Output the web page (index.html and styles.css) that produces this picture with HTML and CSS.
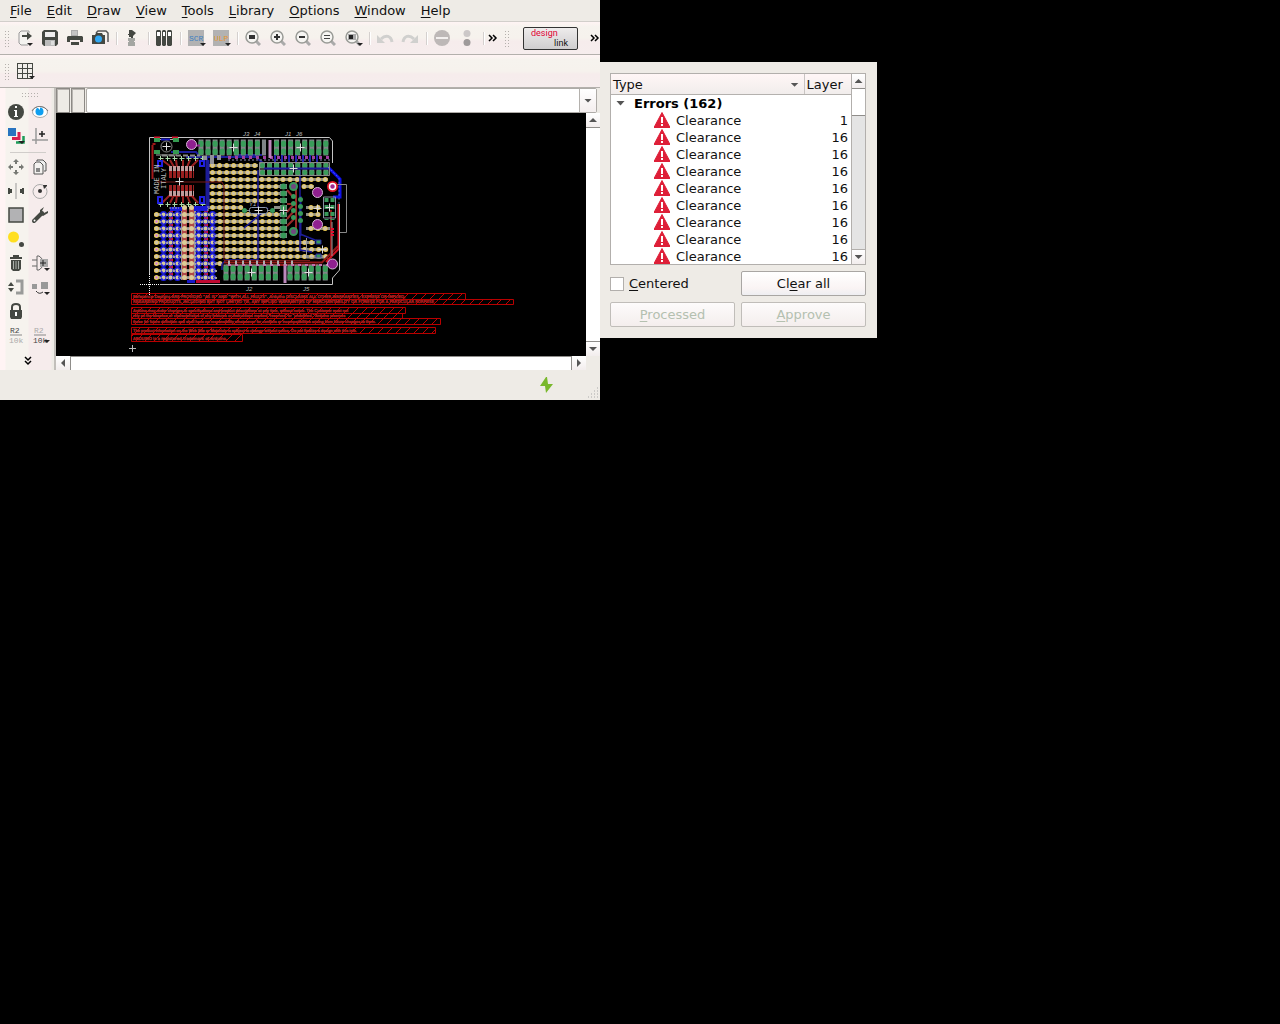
FILE: index.html
```html
<!DOCTYPE html>
<html lang="en">
<head>
<meta charset="utf-8">
<title>Board editor</title>
<link rel="stylesheet" href="styles.css">
</head>
<body>
<svg class="defs" aria-hidden="true">
  <defs>
    <symbol id="warn" viewBox="0 0 16 16"><path d="M8 0.500L16 15.500H0z" fill="#de1f38" stroke="#de1f38" stroke-linejoin="round"/><path d="M7 5h2v6H7zM7 12h2v2H7z" fill="#fff"/></symbol>
    <symbol id="lens" viewBox="0 0 16 16"><path d="M11 11l4 4" stroke="#aaa" stroke-width="3"/><circle cx="7" cy="7" r="6" fill="#f6f5f2" stroke="#999b96" stroke-width="1.500"/></symbol>
    <pattern id="hatch" width="9" height="9" patternUnits="userSpaceOnUse"><path d="M0 9L9 0" stroke="#c00000" stroke-width="1"/></pattern>
    <g id="cross"><path d="M-4 0h8M0-4v8" stroke="#ddd"/></g>
    <g id="via"><circle r="5" fill="#902090" stroke="#d8b8d8"/></g>
    <path id="field" d="M212.500 165.500H258M212.500 172.500H258M212.500 179.500H328M212.500 186.500H280M212.500 193.500H280M212.500 200.500H280M212.500 207.500H243M156.500 214.500H280M156.500 221.500H280M156.500 228.500H280M156.500 235.500H280M156.500 242.500H315M156.500 249.500H328M156.500 256.500H328M156.500 263.500H220M156.500 270.500H216M156.500 277.500H216M304 186.500H314M311 207.500H320M311 214.500H320M311 228.500H330"/>
    <path id="supply" d="M163.500 214.500V278M170.500 214.500V278M177.500 214.500V278M198.500 214.500V278M205.500 214.500V278M212.500 214.500V278"/>
  </defs>
</svg>

<main class="desktop">
<section class="window editor">
  <nav class="menubar">
    <a href="#"><u>F</u>ile</a><a href="#"><u>E</u>dit</a><a href="#"><u>D</u>raw</a><a href="#"><u>V</u>iew</a><a href="#"><u>T</u>ools</a><a href="#"><u>L</u>ibrary</a><a href="#"><u>O</u>ptions</a><a href="#"><u>W</u>indow</a><a href="#"><u>H</u>elp</a>
  </nav>

  <div class="toolbar">
    <span class="grip"></span>
    <button class="tool" aria-label="Open"><svg viewBox="0 0 16 16"><path d="M12 3V1H4L2 3v10l2 2h7" fill="#f4f3f0" stroke="#999"/><path d="M5 5h5V2l5 4-5 4V7H5z" fill="#444842"/><path d="M10 13h6l-3 3z" fill="#222"/></svg></button>
    <button class="tool" aria-label="Save"><svg viewBox="0 0 16 16"><path d="M0 2l2-2h12l2 2v12l-2 2H2l-2-2z" fill="#444842"/><path d="M3 2h10v5H3z" fill="#eee"/><path d="M3 10h10v6H3z" fill="#bbb"/><path d="M9 11h3v4H9z" fill="#ddd"/></svg></button>
    <button class="tool" aria-label="Print"><svg viewBox="0 0 16 16"><path d="M4 0h7v6H4z" fill="#aaa"/><path d="M5 2h5M5 4h5" stroke="#ddd"/><path d="M1 6h14l1 1v5h-3v-2H3v2H0V7z" fill="#444842"/><path d="M4 12h8v3H4z" fill="#444842"/></svg></button>
    <button class="tool" aria-label="Export image"><svg viewBox="0 0 16 16"><path d="M4 3l2-2h8l2 2v9" fill="none" stroke="#555" stroke-width="1.500"/><path d="M0 5h3l1-2h6l1 2h2v9H0z" fill="#444842"/><circle cx="6.500" cy="9" r="3.500" fill="#30a8f4"/></svg></button>
    <span class="sep"></span>
    <button class="tool" aria-label="Schematic"><svg viewBox="0 0 16 16"><path d="M5 0h3l4 3-4 4H5V5H4V4h1z" fill="#444842"/><path d="M7 6h2v2H7z" fill="#444842"/><path d="M4 8h7v3H4zM5 11h5v1H5zM4 12h7v4H4z" fill="#a4a6a2"/></svg></button>
    <span class="sep"></span>
    <button class="tool" aria-label="Library"><svg viewBox="0 0 16 16"><path d="M0 1l1-1h3l1 1v14l-1 1H1l-1-1zM6 1l1-1h2l1 1v14l-1 1H7l-1-1zM11 1l1-1h3l1 1v14l-1 1h-3l-1-1z" fill="#444842"/><path d="M1 2h3v4H1zM7 2h2v4H7zM12 2h3v4h-3z" fill="#fff"/></svg></button>
    <span class="sep"></span>
    <button class="tool" aria-label="Run script"><svg viewBox="0 0 16 16"><path d="M0 0h16v16H0z" fill="#b2b2b2"/><text class="glyph" x="1" y="11" fill="#3d7fc0">SCR</text><path d="M12 13h6l-3 3z" fill="#222"/></svg></button>
    <button class="tool" aria-label="Run ULP"><svg viewBox="0 0 16 16"><path d="M0 0h16v16H0z" fill="#b2b2b2"/><text class="glyph" x="1" y="11" fill="#e8962c">ULP</text><path d="M12 13h6l-3 3z" fill="#222"/></svg></button>
    <span class="sep"></span>
    <button class="tool" aria-label="Zoom to fit"><svg viewBox="0 0 16 16"><use href="#lens"/><path d="M4 5h6v4H4z" fill="#333"/></svg></button>
    <button class="tool" aria-label="Zoom in"><svg viewBox="0 0 16 16"><use href="#lens"/><path d="M4 7h6M7 4v6" stroke="#333" stroke-width="2"/></svg></button>
    <button class="tool" aria-label="Zoom out"><svg viewBox="0 0 16 16"><use href="#lens"/><path d="M4 7h6" stroke="#333" stroke-width="2"/></svg></button>
    <button class="tool" aria-label="Redraw"><svg viewBox="0 0 16 16"><use href="#lens"/><path d="M4 5.500h6M4 8.500h6" stroke="#444"/></svg></button>
    <button class="tool" aria-label="Zoom to area"><svg viewBox="0 0 16 16"><use href="#lens"/><path d="M3 4h8v6H3z" fill="#aaa"/><path d="M4 5h4v4H4z" fill="#222"/><path d="M12 13h6l-3 3z" fill="#222"/></svg></button>
    <span class="sep"></span>
    <button class="tool" aria-label="Undo"><svg viewBox="0 0 16 16"><path d="M15 12C14 6 9 4 4 9" fill="none" stroke="#d0d0ce" stroke-width="3"/><path d="M0 5v8h8z" fill="#d0d0ce"/></svg></button>
    <button class="tool" aria-label="Redo"><svg viewBox="0 0 16 16"><path d="M1 12C2 6 7 4 12 9" fill="none" stroke="#d0d0ce" stroke-width="3"/><path d="M16 5v8H8z" fill="#d0d0ce"/></svg></button>
    <span class="sep"></span>
    <button class="tool" aria-label="Stop"><svg viewBox="0 0 16 16"><circle cx="8" cy="8" r="8" fill="#bdb8b7"/><path d="M2 8h12" stroke="#f2efee" stroke-width="2"/></svg></button>
    <button class="tool" aria-label="Go"><svg viewBox="0 0 16 16"><circle cx="8" cy="3.500" r="3.500" fill="#ccc8c8"/><circle cx="8" cy="12.500" r="3.500" fill="#9e9a9a"/></svg></button>
    <span class="sep"></span>
    <button class="more" aria-label="More tools"><svg viewBox="0 0 8 6"><path d="M0 0l3 3-3 3M4 0l3 3-3 3" fill="none" stroke="#000" stroke-width="1.500"/></svg></button>
    <span class="grip"></span>
    <button class="designlink"><span>design</span><span class="link">link</span></button>
    <button class="more last" aria-label="More links"><svg viewBox="0 0 8 6"><path d="M0 0l3 3-3 3M4 0l3 3-3 3" fill="none" stroke="#000" stroke-width="1.500"/></svg></button>
  </div>

  <div class="toolbar">
    <span class="grip"></span>
    <button class="tool" aria-label="Grid"><svg viewBox="0 0 16 16"><path d="M0 0h16v16H0z" fill="#444842"/><path d="M1 1h4v4H1zM6 1h4v4H6zM11 1h4v4h-4zM1 6h4v4H1zM6 6h4v4H6zM11 6h4v4h-4zM1 11h4v4H1zM6 11h4v4H6zM11 11h4v4h-4z" fill="#f0eeea"/><path d="M12 13h6l-3 3z" fill="#222"/></svg></button>
  </div>

  <div class="workspace">
    <aside class="palette">
      <span class="grip-wide"></span>
      <div class="palette-grid">
        <button class="tool" aria-label="Info"><svg viewBox="0 0 16 16"><circle cx="8" cy="8" r="8" fill="#444842"/><path d="M7 2h2v2H7zM6 6h3v6h1v1H6v-1h1V7H6z" fill="#fff"/></svg></button>
        <button class="tool" aria-label="Show"><svg viewBox="0 0 16 16"><ellipse cx="8" cy="8" rx="7.500" ry="5.500" fill="#fff" stroke="#aaa"/><path d="M0 7C3 1 12 1 16 7" fill="none" stroke="#777"/><circle cx="7.500" cy="7.500" r="4" fill="#0e9ef0"/><path d="M5 3l3 0v3z" fill="#fff"/></svg></button>
        <button class="tool" aria-label="Display layers"><svg viewBox="0 0 16 16"><path d="M8 14.500h7.500V8" fill="none" stroke="#1b9c58" stroke-width="2.500"/><path d="M4 10.500h7V4" fill="none" stroke="#d81f50" stroke-width="3"/><path d="M0 0h8v8H0z" fill="#2874c0"/><path d="M10 13h7l-3 3z" fill="#222"/></svg></button>
        <button class="tool" aria-label="Mark"><svg viewBox="0 0 16 16"><path d="M4 0v16M0 12h16" stroke="#999" stroke-width="1.500"/><path d="M7 6h6M10 3v6" stroke="#222" stroke-width="1.500"/></svg></button>
        <span class="rule"></span>
        <button class="tool" aria-label="Move"><svg viewBox="0 0 16 16"><path d="M8 0l3 3H9v2H7V3H5zM8 16l3-3H9v-2H7v2H5zM0 8l3-3v2h2v2H3v2zM16 8l-3-3v2h-2v2h2v2z" fill="#777974"/></svg></button>
        <button class="tool" aria-label="Copy"><svg viewBox="0 0 16 16"><path d="M5 2V1h6l3 3v8h-2" fill="#eee" stroke="#555"/><path d="M2 5l2-2h4l3 3v9H2z" fill="#f4f2f0" stroke="#555"/><path d="M4 9h4v4H4z" fill="#888"/></svg></button>
        <button class="tool" aria-label="Mirror"><svg viewBox="0 0 16 16"><path d="M8 0v16" stroke="#999"/><path d="M0 5h2v1h2v4H2v1H0zM16 5h-2v1h-2v4h2v1h2z" fill="#444842"/></svg></button>
        <button class="tool" aria-label="Rotate"><svg viewBox="0 0 16 16"><circle cx="8" cy="8.500" r="7" fill="none" stroke="#aaa"/><circle cx="8" cy="8" r="2" fill="#333"/><path d="M11 2h4v1l-3 3z" fill="#333"/></svg></button>
        <button class="tool" aria-label="Group"><svg viewBox="0 0 16 16"><path d="M1 1h14v14H1z" fill="#b2b2b4" stroke="#444842" stroke-width="1.500"/></svg></button>
        <button class="tool" aria-label="Change"><svg viewBox="0 0 16 16"><path d="M2 14L10 6" stroke="#444842" stroke-width="4" stroke-linecap="round"/><path d="M12 0L8 3v4l3 2 5-3V4l-4 2-2-2z" fill="#444842"/><circle cx="2.500" cy="13.500" r="1" fill="#fff"/></svg></button>
        <button class="tool" aria-label="Paste"><svg viewBox="0 0 16 16"><circle cx="5.500" cy="6" r="5.500" fill="#ffdf20"/><circle cx="13.500" cy="13.500" r="2.500" fill="#444842"/></svg></button>
        <span></span>
        <button class="tool" aria-label="Delete"><svg viewBox="0 0 16 16"><path d="M5 0h6v2h3v2H2V2h3zM3 5h10v9l-2 2H5l-2-2z" fill="#444842"/><path d="M5.500 6v8M8 6v8M10.500 6v8" stroke="#aab0aa"/></svg></button>
        <button class="tool" aria-label="Add"><svg viewBox="0 0 16 16"><path d="M0 5h5M0 11h5" stroke="#666"/><path d="M5 1h2q4 2 4 7t-4 7H5z" fill="none" stroke="#666"/><path d="M8 4h8v8H8z" fill="#aaa"/><path d="M8 8h6M11 5v6" stroke="#222"/><path d="M12 13h6l-3 3z" fill="#222"/></svg></button>
        <button class="tool" aria-label="Pinswap"><svg viewBox="0 0 16 16"><path d="M0 7l3-4 3 4zM0 9l3 4 3-4z" fill="#444842"/><path d="M8 2h6v12H8" fill="none" stroke="#999b99" stroke-width="3"/></svg></button>
        <button class="tool" aria-label="Replace"><svg viewBox="0 0 16 16"><path d="M0 5h5v5H0zM9 3h7v7H9z" fill="#999"/><path d="M4 12q3 4 7 1" fill="none" stroke="#333"/><path d="M12 13h6l-3 3z" fill="#222"/></svg></button>
        <button class="tool" aria-label="Lock"><svg viewBox="0 0 16 16"><path d="M4 8V4q0-3 4-3t4 3v4" fill="none" stroke="#444842" stroke-width="2"/><path d="M2 7h12v7l-1 2H3l-1-2z" fill="#444842"/><path d="M7 9h2v4H7z" fill="#fff"/></svg></button>
        <span></span>
        <button class="tool" aria-label="Name"><svg viewBox="0 0 16 16"><text class="glyph" x="2" y="6" fill="#444">R2</text><path d="M2 8h12" stroke="#888"/><text class="glyph" x="1" y="16" fill="#aaa">10k</text></svg></button>
        <button class="tool" aria-label="Value"><svg viewBox="0 0 16 16"><text class="glyph" x="2" y="6" fill="#aaa">R2</text><path d="M2 8h12" stroke="#888"/><text class="glyph" x="1" y="16" fill="#444">10k</text><path d="M12 13h6l-3 3z" fill="#222"/></svg></button>
      </div>
      <button class="more down" aria-label="More tools"><svg viewBox="0 0 6 8"><path d="M0 0l3 3 3-3M0 4l3 3 3-3" fill="none" stroke="#000" stroke-width="1.500"/></svg></button>
    </aside>

    <div class="sheet">
      <div class="command">
        <span class="coord"></span><span class="coord"></span>
        <div class="combo"><input type="text" aria-label="Command line"><button aria-label="Command history"><i class="tri down"></i></button></div>
      </div>
      <div class="view">
        <svg class="board" viewBox="56 113 530 243" preserveAspectRatio="xMinYMin slice">
          <!-- prototyping pads: links, copper, drill area -->
          <g fill="none">
            <path stroke="#8c8c88" stroke-width="3" d="M208 165.500H258M208 172.500H258M208 179.500H328M208 186.500H280M208 193.500H280M208 200.500H280M208 207.500H243M274 207.500H280M154 214.500H280M154 221.500H280M154 228.500H280M154 235.500H280M154 242.500H315M154 249.500H328M154 256.500H328M154 263.500H220M154 270.500H216M154 277.500H216M302 186.500H314M306 207.500H320M306 214.500H320M306 228.500H330"/>
            <use href="#field" stroke="#ecc430" stroke-width="5" stroke-linecap="round" stroke-dasharray="0 7.050"/>
            <use href="#field" stroke="#d0c4a4" stroke-width="4" stroke-linecap="round" stroke-dasharray="0 7.050"/>
          </g>

          <!-- supply columns -->
          <g fill="none">
            <g class="crisp">
              <path d="M170.500 211V280M205.500 211V280" stroke="#d81038" stroke-width="4"/>
              <path d="M181.500 207V280M194.500 207V280" stroke="#999" stroke-width="2"/>
              <path d="M184.500 207V280M191.500 207V280" stroke="#b04848" stroke-width="5"/>
            </g>
            <g stroke-linecap="round" stroke-dasharray="0 7">
              <path d="M163.500 214.500V278M177.500 214.500V278M198.500 214.500V278M212.500 214.500V278" stroke="#1c1ce0" stroke-width="7"/>
              <path d="M170.500 214.500V278M205.500 214.500V278" stroke="#2828c0" stroke-width="6"/>
              <path d="M154 214.500H180M154 221.500H180" stroke="none"/>
              <use href="#supply" stroke="#d4c8a0" stroke-width="4"/>
              <path stroke="#dccc98" stroke-width="5" d="M184.500 207.500V278M191.500 207.500V278"/>
            </g>
            <path class="crisp" stroke="#a0a0a0" stroke-width="2" stroke-dasharray="2 5" d="M159 214.500H218M159 221.500H218M159 228.500H218M159 235.500H218M159 242.500H218M159 249.500H218M159 256.500H218M159 263.500H218M159 270.500H218M159 277.500H218"/>
            <path stroke="#2828d8" stroke-dasharray="2 5" d="M162.500 215.500V280M178.500 213.500V280M197.500 215.500V280M213.500 213.500V280"/>
          </g>
          <g fill="#e070d0"><circle cx="156.500" cy="221.500" r="1"/><circle cx="156.500" cy="235.500" r="1"/><circle cx="156.500" cy="249.500" r="1"/><circle cx="156.500" cy="263.500" r="1"/><circle cx="156.500" cy="277.500" r="1"/></g>

          <!-- copper traces -->
          <g fill="none">
            <path d="M171 152H196L201 158M207 158V208M186 157H256L264 164M235 155H262" stroke="#1c1c98" stroke-width="2"/>
            <path d="M207.500 160V208" stroke="#1c1c98" stroke-width="4"/>
            <path d="M258 170V262M244 228L268 208M300 170V200M300 204V250L312 252M300 234L320 242M222 264V270M222 264L226 260H258" stroke="#1c1c98" stroke-width="1.500"/>
            <path d="M152.500 145V179M152.500 144h3" stroke="#a01818" stroke-width="2"/>
            <path d="M157 182H222L224 186V260M224 260.500H310" stroke="#781818"/>
            <path d="M224 262.500H322L338 246M226 265H318M331 210V258" stroke="#901818" stroke-width="2"/>
            <path d="M196 281.500H220" stroke="#c00830" stroke-width="3"/><path d="M187 281.500h8" stroke="#1818c8" stroke-width="3"/>
            <path d="M338.500 204V249L326 262" stroke="#d01020" stroke-width="2"/>
            <path d="M328 167L340 179V197H333" stroke="#1010e8" stroke-width="3"/>
            <path d="M328 167L339 178V205" stroke="#70a0ff" stroke-dasharray="1 3"/>
          </g>

          <!-- outline -->
          <g fill="none" stroke="#c4c4c4">
            <path d="M149.500 137.500H329.500L332.500 141V163M339.500 204V270L332.500 278V284.500H160M149.500 137.500V275"/>
            <path d="M336 184.500H346.500V232.500H340" stroke="#888"/>
            <path d="M140 284.500H160M149.500 274V295" stroke="#fff" stroke-dasharray="1 1"/>
          </g>

          <!-- reset switch -->
          <path d="M156 139.500h21M156 155h21" stroke="#a8a8a8" fill="none"/>
          <path d="M154 137.500h6M172 137.500h6" stroke="#d81830" stroke-width="2"/>
          <path d="M161 139.500h9" stroke="#1818c8" stroke-width="2"/>
          <path fill="#349a50" d="M154 138h6v4h-6zM173 138h6v4h-6zM154 150h6v4h-6zM173 150h6v4h-6z"/>
          <circle cx="166.500" cy="146.500" r="5.500" fill="none" stroke="#888"/><use href="#cross" x="166.500" y="146.500"/>

          <!-- fourteen pin driver -->
          <g fill="none">
            <path d="M162 160l8 6M170 160l4 7M176 160l1 7M183 160v7M190 160l-3 7M198 160l-7 7M162 203l8-8M170 203l4-8M176 203l1-8M183 203v-8M190 203l-3-8M198 203l-7-8" stroke="#982020" stroke-width="2"/>
            <g class="crisp">
              <path d="M169 172H194M169 190.500H194" stroke="#982020" stroke-width="12" stroke-dasharray="3 1"/>
              <path d="M169 168.500H194M169 193.500H194" stroke="#c09c9c" stroke-width="5" stroke-dasharray="3 1"/>
            </g>
            <path d="M158.500 158.500H206M158.500 204.500H206" stroke="#a8d8a8" stroke-dasharray="5 2"/>
            <path class="crisp" d="M160 158.500H204M160 204.500H204" stroke="#a8d8a8" stroke-width="5" stroke-dasharray="1 6"/>
            <path d="M162 155.500H200" stroke="#888" stroke-width="2" stroke-dasharray="5 2"/>
          </g>
          <use href="#cross" x="179.500" y="181.500"/>
          <path fill="none" stroke="#2020e0" stroke-width="2" d="M158 161h4v5h-4zM200 161h4v5h-4zM158 197h4v6h-4zM200 197h4v6h-4z"/>
          <path d="M170 207h12v4h-12zM194 206h14v5h-14z" fill="#1818d8"/><path d="M169 208h10M208 206v5" stroke="#aaa" stroke-dasharray="2 1"/>
          <g class="silk" fill="#b8b8b8"><text transform="translate(159 194) rotate(-90)">MADE IN</text><text transform="translate(166 189) rotate(-90)">ITALY</text></g>

          <!-- header strips -->
          <g fill="none">
            <g stroke="#808488" stroke-width="8" stroke-dasharray="5 2.050">
              <path d="M198.500 143.500H266M274 143.500H329M198.500 151.500H266M274 151.500H329M223.500 268.500H280M287.500 268.500H329M223.500 276.500H280M287.500 276.500H329"/>
              <path d="M260 165.500H329M260 172.500H329" stroke-width="6"/>
            </g>
            <g stroke="#3a9c5a" stroke-width="5" stroke-linecap="round" stroke-dasharray="0 7.050">
              <path d="M201 143H264M276.500 143H329M201 151H264M276.500 151H329M226 268H279M290 268H329M226 276H279M290 276H329"/>
              <path d="M201 144.500H264M276.500 144.500H329M201 152.500H264M276.500 152.500H329M226 269.500H279M290 269.500H329M226 277.500H279M290 277.500H329"/>
              <path d="M262.500 165.500H329M262.500 172.500H329"/>
            </g>
            <path d="M264 168.500H328" stroke="#1c1c98" stroke-width="2"/>
            <path d="M259.500 162.500H329.500V175.500H259.500z" stroke="#888"/>
            <path d="M205 155.500V160M212 155V164M219 155V160" stroke="#909098" stroke-width="4"/>
            <path d="M228 157.500H330" stroke="#a040a0" stroke-width="3" stroke-dasharray="3 4"/>
            <path d="M228 160H330" stroke="#9090b8" stroke-dasharray="2 2"/>
            <path d="M275 155V162M282 155V162M289 155V162M296 155V162M303 155V162M310 155V162M317 155V162" stroke="#2424b0" stroke-width="2"/>
            <path d="M270 140V158M285 264V283" stroke="#bc88bc" stroke-width="3"/>
            <path d="M228 265H328" stroke="#c070b0" stroke-width="2" stroke-dasharray="3 4"/>
            <path d="M228 262.500H296" stroke="#b0b0b0" stroke-width="4" stroke-dasharray="2 5"/>
            <path d="M193 145.500H200" stroke="#902090" stroke-width="2"/>
          </g>
          <use href="#cross" x="233.500" y="147.500"/><use href="#cross" x="300.500" y="147.500"/><use href="#cross" x="251.500" y="272.500"/><use href="#cross" x="308.500" y="272.500"/><use href="#cross" x="293.500" y="168.500"/>

          <!-- crystal -->
          <path d="M244 210.500H273" stroke="#888"/><rect x="249.500" y="207.500" width="18" height="6" rx="2" fill="#000" stroke="#8c98b0"/><use href="#cross" x="258.500" y="210.500"/>
          <circle cx="244.500" cy="210.500" r="2.500" fill="#38985a"/><circle cx="272.500" cy="210.500" r="2.500" fill="#38985a"/>

          <!-- series header and connectors -->
          <path d="M283.500 184V238" stroke="#808488" stroke-width="7" stroke-dasharray="5 2"/><path d="M283.500 186.500V238" stroke="#38985a" stroke-width="6" stroke-linecap="round" stroke-dasharray="0 7"/>
          <g fill="none" stroke="#982828" stroke-width="2"><path d="M287 190l6 7M287 204h6M287 212l7-8M287 219l7-8M287 226l7-7M296 182V232"/></g>
          <path d="M300.500 196V236" stroke="#1c1c98" stroke-width="2"/>
          <g stroke="#38985a" stroke-width="5" stroke-linecap="round" stroke-dasharray="0 7"><path d="M293.500 196.500V222M300.500 199.500V222"/></g>
          <circle cx="293.500" cy="186.500" r="3.500" fill="#704880" stroke="#38985a" stroke-width="2"/><circle cx="293.500" cy="231.500" r="3.500" fill="#704880" stroke="#38985a" stroke-width="2"/>
          <g stroke="#38985a" stroke-width="4" stroke-dasharray="4 3"><path d="M326.500 198V220M332.500 198V220"/></g>
          <path d="M323.500 197V218H335.500V197z" fill="none" stroke="#8890a0"/>
          <use href="#cross" x="329.500" y="207.500"/><use href="#cross" x="317.500" y="208.500"/><use href="#cross" x="283.500" y="210.500"/><use href="#cross" x="322.500" y="249.500"/>
          <path fill="#38985a" stroke="#2828a0" d="M316 240h5v4h-5zM316 254h5v4h-5z"/>
          <path d="M306.500 238V258H324M332 222V256" fill="none" stroke="#999"/>
          <path d="M332.500 228V236" stroke="#e01030" stroke-width="3" stroke-dasharray="2 1"/>
          <use href="#via" x="191.500" y="144.500"/><use href="#via" x="317.500" y="192.500"/><use href="#via" x="317.500" y="224.500"/><use href="#via" x="332.500" y="264"/>
          <circle cx="332.500" cy="186.500" r="4.500" fill="#a02890" stroke="#e01828" stroke-width="2"/><circle cx="332.500" cy="186.500" r="3" fill="none" stroke="#fff" stroke-width="1.500"/>

          <g class="silk small" fill="#bbb"><text x="243" y="136">J3</text><text x="254" y="136">J4</text><text x="285" y="136">J1</text><text x="296" y="136">J6</text><text x="246" y="291">J2</text><text x="303" y="291">J5</text><text x="249" y="206">Y1</text></g>

          <!-- notice block -->
          <g fill="url(#hatch)" stroke="#b80000">
            <path d="M131.500 293.500H465.500V299.500H131.500zM131.500 299.500H513.500V304.500H131.500zM131.500 307.500H405.500V313.500H131.500zM131.500 313.500H402.500V318.500H131.500zM131.500 318.500H440.500V324.500H131.500zM131.500 327.500H435.500V333.500H131.500zM131.500 334.500H242.500V341.500H131.500z"/>
          </g>
          <g class="notice" fill="#b82424" stroke="#a81c1c" stroke-width="0.400">
            <text class="wide" x="133" y="298">Reference Designs ARE PROVIDED "AS IS" AND "WITH ALL FAULTS". Arduino DISCLAIMS ALL OTHER WARRANTIES, EXPRESS OR IMPLIED,</text>
            <text class="wide" x="133" y="303">REGARDING PRODUCTS, INCLUDING BUT NOT LIMITED TO, ANY IMPLIED WARRANTIES OF MERCHANTABILITY OR FITNESS FOR A PARTICULAR PURPOSE</text>
            <text x="133" y="312">Arduino may make changes to specifications and product descriptions at any time, without notice. The Customer must not</text>
            <text x="133" y="317">rely on the absence or characteristics of any features or instructions marked "reserved" or "undefined." Arduino reserves</text>
            <text x="133" y="323">these for future definition and shall have no responsibility whatsoever for conflicts or incompatibilities arising from future changes to them.</text>
            <text x="133" y="332">The product information on the Web Site or Materials is subject to change without notice. Do not finalize a design with this info.</text>
            <text class="wide" x="133" y="340">ARDUINO is a registered trademark of Arduino.</text>
          </g>
          <path d="M129 348.500h7M132.500 345v7" stroke="#bbb"/>
        </svg>
        <div class="scroll vertical"><button aria-label="Scroll up"><i class="tri up"></i></button><span class="thumb full"></span><button aria-label="Scroll down"><i class="tri down"></i></button></div>
        <div class="scroll horizontal"><button aria-label="Scroll left"><i class="tri left"></i></button><span class="thumb full"></span><button aria-label="Scroll right"><i class="tri right"></i></button></div>
      </div>
    </div>
  </div>

  <footer class="status">
    <svg class="bolt" viewBox="0 0 14 16"><path d="M7 0L1 9h5l1 7 7-9H9L8 0z" fill="#79b82c"/></svg>
    <svg class="resize" viewBox="0 0 12 12"><path d="M10 1h1M7 4h4M4 7h7M1 10h10" stroke="#aaa" stroke-dasharray="1 2"/></svg>
  </footer>
</section>

<section class="window errors">
  <div class="list">
    <table>
      <thead><tr><th class="type">Type <i class="tri down"></i></th><th class="layer">Layer</th></tr></thead>
      <tbody>
        <tr class="group"><td colspan="2"><i class="tri down"></i>Errors (162)</td></tr>
        <tr><td><svg><use href="#warn"/></svg>Clearance</td><td>1</td></tr>
        <tr><td><svg><use href="#warn"/></svg>Clearance</td><td>16</td></tr>
        <tr><td><svg><use href="#warn"/></svg>Clearance</td><td>16</td></tr>
        <tr><td><svg><use href="#warn"/></svg>Clearance</td><td>16</td></tr>
        <tr><td><svg><use href="#warn"/></svg>Clearance</td><td>16</td></tr>
        <tr><td><svg><use href="#warn"/></svg>Clearance</td><td>16</td></tr>
        <tr><td><svg><use href="#warn"/></svg>Clearance</td><td>16</td></tr>
        <tr><td><svg><use href="#warn"/></svg>Clearance</td><td>16</td></tr>
        <tr><td><svg><use href="#warn"/></svg>Clearance</td><td>16</td></tr>
      </tbody>
    </table>
    <div class="scroll vertical"><button aria-label="Scroll up"><i class="tri up"></i></button><span class="thumb"></span><span class="track"></span><button aria-label="Scroll down"><i class="tri down"></i></button></div>
  </div>
  <div class="actions">
    <label><input type="checkbox"><span><u>C</u>entered</span></label>
    <button>Cl<u>e</u>ar all</button>
    <button disabled><u>P</u>rocessed</button>
    <button disabled><u>A</u>pprove</button>
  </div>
</section>
</main>
</body>
</html>
```
FILE: styles.css
```css
* { box-sizing: border-box; }
body { margin: 0; background: #000; color: #111; font: 13px/17px "DejaVu Sans", sans-serif; }
button { margin: 0; padding: 0; border: 0; background: none; font: inherit; color: inherit; }
u { text-decoration: underline; text-underline-offset: 2px; text-decoration-skip-ink: none; }
.defs { position: absolute; width: 0; height: 0; }
.desktop { position: relative; min-height: 100vh; }
.window { position: absolute; background: #eeebe6; }

/* editor window */
.editor { left: 0; top: 0; width: 600px; height: 400px; display: flex; flex-direction: column; overflow: hidden; }
.menubar { display: flex; gap: 15px; height: 22px; padding: 2px 10px; border-bottom: 1px solid #d2cfcb; flex: none; }
.menubar a { color: inherit; text-decoration: none; }
.toolbar { display: flex; align-items: center; flex: none; height: 33px; border-bottom: 1px solid #b3b0ac; background: linear-gradient(#fff4f4 0, #f6f3ee 15%, #f6f2ed 50%, #f6ecec 60%, #f6eded 100%); }
.tool { width: 25px; height: 24px; display: grid; place-items: center; flex: none; }
.tool svg { width: 16px; height: 16px; overflow: visible; display: block; }
.glyph { font: 8px "Liberation Mono", monospace; }
.grip { width: 5px; height: 17px; margin: 0 3px 0 4px; flex: none; background: radial-gradient(circle, #b4b0ac 1px, transparent 1px) 0 0 / 3px 3px; }
.sep { width: 7px; height: 13px; flex: none; background: linear-gradient(90deg, transparent 4px, #d4d0ce 4px, #d4d0ce 5px, #fff 5px, #fff 6px, transparent 6px); }
.more { width: 14px; display: grid; place-items: center; flex: none; }
.more svg { width: 8px; height: 6px; overflow: visible; }
.more.last { margin-left: auto; width: 10px; }
.designlink { width: 55px; height: 23px; margin-left: 11px; padding: 0 9px 0 7px; border: 1px solid #333; border-radius: 2px; background: linear-gradient(#eeecec, #d0cecf); font: 9px/10px Roboto, sans-serif; color: #e00034; text-align: left; flex: none; }
.designlink span { display: block; }
.designlink .link { text-align: right; color: #111; }

.workspace { display: flex; flex: 1; min-height: 0; }
.palette { width: 56px; padding: 4px 4px 0; flex: none; border-right: 2px solid #c2bfbb; background: linear-gradient(90deg, #fff4f4 5px, #f6f3ee 6px, #f6f3ee 28px, #f6ecec 29px, #f6ecec 51px, #eeebe6 52px); }
.grip-wide { display: block; width: 17px; height: 6px; margin: 0 auto 2px 17px; background: radial-gradient(circle, #b4b0ac 1px, transparent 1px) 0 0 / 3px 3px; }
.palette-grid { display: grid; grid-template-columns: 24px 24px; }
.palette .tool { width: 24px; }
.rule { grid-column: 1 / 3; height: 1px; margin: 4px 6px 2px; background: #d0cdca; }
.more.down { width: 48px; height: 28px; }
.more.down svg { width: 6px; height: 8px; }

.sheet { display: flex; flex-direction: column; flex: 1; min-width: 0; }
.command { display: flex; gap: 1px; height: 25px; flex: none; padding-right: 3px; }
.coord { width: 14px; border: 1px solid #8c8985; box-shadow: inset 1px 1px #b8b5b1; }
.combo { display: flex; flex: 1; border: 1px solid #aeaba7; border-radius: 2px; background: #fff; }
.combo input { flex: 1; min-width: 0; border: 0; background: none; font: inherit; }
.combo button { width: 17px; border-left: 1px solid #b4b1ad; display: grid; place-items: center; background: linear-gradient(#fff, #f4eeee); }
.view { display: grid; grid-template: 1fr 14px / 1fr 14px; flex: 1; min-height: 0; }
.board { width: 100%; height: 100%; min-height: 0; background: #000; display: block; }
.crisp { shape-rendering: crispEdges; }
.silk { font: 7px "Liberation Mono", monospace; }
.silk.small { font: italic 6px "Liberation Sans", sans-serif; }
.notice { font: 4px "Liberation Sans", sans-serif; }
.notice .wide { font-family: "DejaVu Sans", sans-serif; }

.scroll { display: flex; min-width: 0; min-height: 0; }
.vertical { flex-direction: column; }
.scroll button { width: 14px; height: 14px; flex: none; display: grid; place-items: center; background: linear-gradient(#fff, #f2eded); }
.thumb { background: #fff; border: 0 solid #8f8d8a; }
.full { flex: 1; }
.vertical .thumb { border-width: 1px 0; }
.horizontal .thumb { border-width: 1px 1px 0; }
.tri { display: block; width: 8px; height: 4px; background: #555; }
.tri.down { clip-path: polygon(0 0, 100% 0, 50% 100%); }
.tri.up { clip-path: polygon(0 100%, 100% 100%, 50% 0); }
.tri.left { width: 4px; height: 8px; clip-path: polygon(100% 0, 100% 100%, 0 50%); }
.tri.right { width: 4px; height: 8px; clip-path: polygon(0 0, 0 100%, 100% 50%); }

.status { display: flex; justify-content: flex-end; gap: 34px; height: 30px; padding: 7px 1px 0 0; flex: none; }
.bolt { width: 14px; height: 16px; }
.resize { width: 12px; height: 12px; margin-top: 10px; }

/* error list */
.errors { left: 600px; top: 62px; width: 277px; padding: 11px 11px 11px 10px; }
.list { display: flex; height: 192px; border: 1px solid #b2afac; background: #fff; overflow: hidden; }
.list table { flex: 1; border-collapse: collapse; table-layout: fixed; align-self: flex-start; }
.list th { height: 20px; padding: 1px 2px 0; text-align: left; font-weight: normal; border-bottom: 1px solid #b4b1ae; background: linear-gradient(#fff6f6, #f1edec); }
.list .type { width: 194px; border-right: 1px solid #c8c4c2; }
.type .tri { float: right; margin: 7px 3px 0 0; }
.layer { width: 47px; }
.list td { height: 17px; padding: 0 3px 0 43px; line-height: 17px; }
.list td + td { padding-left: 0; text-align: right; }
.list td svg { width: 16px; height: 16px; margin-right: 6px; float: left; }
.list .group td { padding-left: 4px; font-weight: bold; color: #000; }
.group .tri { float: left; width: 9px; height: 5px; margin: 6px 9px 0 1px; }
.list .scroll { width: 14px; flex: none; border-left: 1px solid #b2afac; }
.list .scroll button { width: 13px; }
.list .thumb { height: 28px; flex: none; }
.track { flex: 1; background: #e4e4e4; border-bottom: 1px solid #b2afac; }
.actions { display: grid; grid-template-columns: 1fr 1fr; gap: 6px; margin-top: 6px; }
.actions label { display: flex; align-items: center; gap: 5px; }
.actions input { appearance: none; width: 14px; height: 14px; margin: 0; border: 1px solid #b2afac; background: #fff; }
.actions button { height: 25px; border: 1px solid #a9a6a3; border-radius: 2px; background: linear-gradient(#fff, #faf4f4 70%, #eeeef1); }
.actions button:disabled { color: #b4c0b0; border-color: #c0bdb9; background: linear-gradient(#fdfbfb, #f4eeed); }
```
